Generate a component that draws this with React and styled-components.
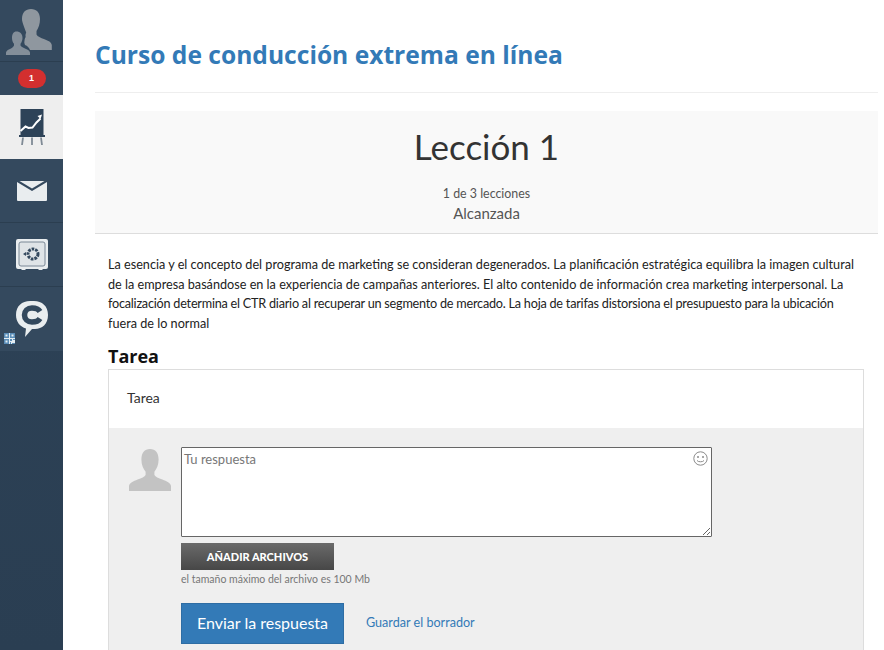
import React from 'react';
import styled, { createGlobalStyle } from 'styled-components';

const GlobalStyle = createGlobalStyle`
  html, body {
    margin: 0;
    padding: 0;
    height: 650px;
    overflow: hidden;
    background: #fff;
    font-family: Lato, "Open Sans", "Liberation Sans", sans-serif;
  }
  * { box-sizing: border-box; }
`;

function PersonIcon({ width, height, fill }) {
  return (
    <svg width={width} height={height} viewBox="0 0 42 42">
      <path
        fill={fill}
        d="M21 0c5.500 0 8.600 4 8.600 10.500 0 5-1.800 9.500-4.200 12.200v3.300c1 1.900 4 3 8 4.600 4.300 1.700 8.200 3.400 8.600 6.400V42H0v-5c.4-3 4.300-4.700 8.600-6.400 4-1.600 7-2.700 8-4.600v-3.300C14.200 20 12.400 15.500 12.400 10.500 12.400 4 15.500 0 21 0z"
      />
    </svg>
  );
}

function AvatarIcon() {
  return (
    <svg width="63" height="62" viewBox="0 0 63 62">
      <path
        fill="#8f979f"
        d="M31 9c5.500 0 9 3.500 9 10 0 5-1.500 9-3.500 12v3.500c1 2 4 3.300 8 4.800 4 1.500 6.800 2.900 7.300 5.700v5H30c-1-2.500-2.500-4-5-5-.5-1.500-1-2.500-.5-4 0-2 .5-3 1.200-4-.4-1.500-.2-3 .5-4.500C23.500 25 22 22 22 19c0-6.500 3.500-10 9-10z"
      />
      <path
        fill="#838e99"
        d="M16.500 31.500c3.700 0 6 2.500 6 6.500 0 2.500-1 4.500-2 5.800v1.700c.8 1.500 3 2.300 5 3.200 2.400 1 4 2 4.500 3.800V55H6v-2.500c.5-1.800 2.100-2.800 4.500-3.800 2-.9 2.700-1.700 3.500-3.200v-1.700c-1.200-1.300-2-3.300-2-5.800 0-4 1.500-6.500 4.500-6.500z"
      />
    </svg>
  );
}

function ChartIcon() {
  return (
    <svg width="26" height="36" viewBox="0 0 26 36">
      <rect x="1.500" y="0" width="23" height="26" fill="#2e4358" />
      <path d="M1.500 22l5-4.500 3 1.500 4-.5 4-5 4-4" fill="none" stroke="#fff" strokeWidth="2" />
      <path d="M23 5.500l-4.500 1.500 3 3z" fill="#fff" />
      <rect x="0" y="26" width="26" height="2" fill="#2e4358" />
      <path d="M4 28.500l-1 7.500M13 28.500V36M22 28.500l1 7.500" stroke="#7f8a95" strokeWidth="1.800" />
    </svg>
  );
}

function MailIcon() {
  return (
    <svg width="30" height="20" viewBox="0 0 30 20">
      <path d="M0 1l15 9L30 1v18a1 1 0 0 1-1 1H1a1 1 0 0 1-1-1z" fill="#e9edef" />
      <path d="M2.500 0h25L15 7.500z" fill="#e9edef" />
    </svg>
  );
}

function SafeIcon() {
  return (
    <svg width="32" height="31" viewBox="0 0 32 31">
      <path d="M2 0h28a2 2 0 0 1 2 2v26a2 2 0 0 1-2 2h-3l-1 1h-3l-1-1H10l-1 1H6l-1-1H2a2 2 0 0 1-2-2V2a2 2 0 0 1 2-2z" fill="#e9edef" />
      <rect x="3" y="3" width="26" height="24" rx="2" fill="#dfe4e7" stroke="#7b8896" strokeWidth="1" />
      <circle cx="17" cy="15" r="5" fill="none" stroke="#34495e" strokeWidth="3" strokeDasharray="2.600 1" />
      <path d="M7 15l3-2v4z" fill="#34495e" />
    </svg>
  );
}

function ChatIcon() {
  return (
    <svg width="32" height="36" viewBox="0 0 32 36">
      <path
        fill="#e9edef"
        d="M14 0h4c8 0 14 5 14 14s-6 14-13 14h-3l-7 8 1-8.500C4 25.500 0 21 0 14 0 5 6 0 14 0z"
      />
      <path
        fill="none"
        stroke="#33495e"
        strokeWidth="5.500"
        d="M24 10.500C22.500 8 19.500 7 16 7c-4.500 0-7.500 2.800-7.500 7s3 7 7.500 7c3.500 0 6.500-1 8-3.500"
      />
    </svg>
  );
}

function QrIcon() {
  return (
    <svg width="11" height="11" viewBox="0 0 11 11">
      <rect width="11" height="11" fill="#e4edf2" />
      <path
        fill="#5a8db8"
        d="M0 0h5v5H0zm1.500 1.500v2h2v-2zM6 0h5v5H6zm1.500 1.500v2h2v-2zM0 6h5v5H0zm1.500 1.500v2h2v-2zM6 6h2v2H6zm3 0h2v1H9zM6 9h1v2H6zm2 1h3v1H8z"
      />
    </svg>
  );
}

function SmileIcon() {
  return (
    <svg width="15" height="15" viewBox="0 0 15 15">
      <circle cx="7.500" cy="7.500" r="6.700" fill="none" stroke="#8b8b8b" strokeWidth="1" />
      <circle cx="5" cy="6" r="1" fill="#8b8b8b" />
      <circle cx="10" cy="6" r="1" fill="#8b8b8b" />
      <path d="M4 9.500c1 1.700 6 1.700 7 0" fill="none" stroke="#8b8b8b" strokeWidth="1" />
    </svg>
  );
}

export default function App() {
  return (
    <Page>
      <GlobalStyle />
      <Sidebar>
        <AvatarRow>
          <AvatarIcon />
        </AvatarRow>
        <BadgeRow>
          <Badge>1</Badge>
        </BadgeRow>
        <NavItem $active>
          <ChartIcon />
        </NavItem>
        <NavItem>
          <MailIcon />
        </NavItem>
        <NavItem>
          <SafeIcon />
        </NavItem>
        <NavItem $last>
          <ChatIcon />
          <QrBadge>
            <QrIcon />
          </QrBadge>
        </NavItem>
      </Sidebar>
      <Main>
        <Header>
          <Title>Curso de conducción extrema en línea</Title>
        </Header>
        <LessonHead>
          <LessonTitle>Lección 1</LessonTitle>
          <LessonCount>1 de 3 lecciones</LessonCount>
          <LessonStatus>Alcanzada</LessonStatus>
        </LessonHead>
        <Description>
          <DescLine>La esencia y el concepto del programa de marketing se consideran degenerados. La planificación estratégica equilibra la imagen cultural</DescLine>
          <DescLine>de la empresa basándose en la experiencia de campañas anteriores. El alto contenido de información crea marketing interpersonal. La</DescLine>
          <DescLine $tight>focalización determina el CTR diario al recuperar un segmento de mercado. La hoja de tarifas distorsiona el presupuesto para la ubicación</DescLine>
          <DescLine>fuera de lo normal</DescLine>
        </Description>
        <SectionTitle>Tarea</SectionTitle>
        <TaskCard>
          <TaskName>Tarea</TaskName>
          <AnswerArea>
            <AnswerAvatar>
              <PersonIcon width={42} height={42} fill="#c3c3c3" />
            </AnswerAvatar>
            <AnswerForm>
              <InputWrap>
                <AnswerInput placeholder="Tu respuesta" />
                <EmojiButton>
                  <SmileIcon />
                </EmojiButton>
              </InputWrap>
              <FileButton>AÑADIR ARCHIVOS</FileButton>
              <FileNote>el tamaño máximo del archivo es 100 Mb</FileNote>
              <Actions>
                <SubmitButton>Enviar la respuesta</SubmitButton>
                <DraftLink>Guardar el borrador</DraftLink>
              </Actions>
            </AnswerForm>
          </AnswerArea>
        </TaskCard>
      </Main>
    </Page>
  );
}

const Page = styled.div`
  display: flex;
  width: 884px;
  height: 650px;
  overflow: hidden;
`;

const Sidebar = styled.aside`
  display: flex;
  flex-direction: column;
  flex: none;
  width: 63px;
  height: 650px;
  background: linear-gradient(180deg, #2f4459 0%, #2a3e52 100%);
`;

const AvatarRow = styled.div`
  display: flex;
  height: 62px;
  background: #34495e;
  border-bottom: 1px solid #2b3e50;
`;

const BadgeRow = styled.div`
  display: flex;
  align-items: flex-start;
  justify-content: center;
  height: 33px;
  padding-top: 7px;
  background: #34495e;
`;

const Badge = styled.span`
  width: 28px;
  height: 19px;
  border-radius: 10px;
  background: #d32f2f;
  color: #fff;
  font-family: "Liberation Sans", sans-serif;
  font-size: 9px;
  font-weight: 700;
  line-height: 18px;
  text-align: center;
`;

const NavItem = styled.div`
  position: relative;
  display: flex;
  align-items: center;
  justify-content: center;
  height: 64px;
  background: ${({ $active }) => ($active ? '#eeeeee' : '#34495e')};
  border-bottom: ${({ $active, $last }) => ($active || $last ? 'none' : '1px solid #2b3e50')};
`;

const QrBadge = styled.span`
  position: absolute;
  left: 4px;
  bottom: 7px;
  display: flex;
`;

const Main = styled.main`
  flex: 1;
  min-width: 0;
  padding: 0 6px 0 32px;
`;

const Header = styled.header`
  height: 93px;
  padding-top: 39px;
  border-bottom: 1px solid #eeeeee;
`;

const Title = styled.h1`
  margin: 0;
  color: #337ab7;
  font-family: "Open Sans", sans-serif;
  font-size: 24.6px;
  font-weight: 700;
  line-height: 32px;
`;

const LessonHead = styled.section`
  display: flex;
  flex-direction: column;
  align-items: center;
  height: 123px;
  margin-top: 18px;
  padding-top: 13px;
  background: #f9f9f9;
  border-bottom: 1px solid #dddddd;
`;

const LessonTitle = styled.h2`
  margin: 0;
  color: #333333;
  font-size: 35px;
  font-weight: 400;
  line-height: 44px;
`;

const LessonCount = styled.div`
  margin-top: 17px;
  color: #555555;
  font-size: 12.4px;
  line-height: 18px;
`;

const LessonStatus = styled.div`
  margin-top: 1px;
  color: #555555;
  font-size: 15px;
  line-height: 18px;
`;

const Description = styled.div`
  margin: 21px 0 0 13px;
  color: #222222;
  font-size: 12.66px;
  line-height: 19.500px;
`;

const DescLine = styled.span`
  display: block;
  white-space: nowrap;
  letter-spacing: ${({ $tight }) => ($tight ? '-0.23px' : '0')};
`;

const SectionTitle = styled.h3`
  margin: 12px 0 0 13px;
  color: #111111;
  font-family: "Open Sans", sans-serif;
  font-size: 18px;
  font-weight: 700;
  line-height: 22px;
`;

const TaskCard = styled.section`
  margin: 2px 14px 0 13px;
  border: 1px solid #dddddd;
  border-bottom: none;
  height: 292px;
`;

const TaskName = styled.div`
  height: 58px;
  padding: 18px 0 0 18px;
  color: #333333;
  font-size: 14px;
  line-height: 20px;
`;

const AnswerArea = styled.div`
  display: flex;
  height: 233px;
  padding: 19px 0 0 19px;
  background: #efefef;
`;

const AnswerAvatar = styled.div`
  flex: none;
  width: 53px;
  padding: 2px 0 0 1px;
`;

const AnswerForm = styled.div`
  display: flex;
  flex-direction: column;
  align-items: flex-start;
`;

const InputWrap = styled.div`
  position: relative;
  display: flex;
`;

const AnswerInput = styled.textarea`
  display: block;
  width: 531px;
  height: 90px;
  padding: 2px;
  border: 1px solid #666666;
  border-radius: 1px;
  background: #fff;
  color: #333333;
  font-family: inherit;
  font-size: 13px;
  line-height: 18px;
  outline: none;

  &::placeholder {
    color: #777777;
    opacity: 1;
  }
`;

const EmojiButton = styled.span`
  position: absolute;
  top: 4px;
  right: 4px;
  display: flex;
`;

const FileButton = styled.button`
  width: 153px;
  height: 27px;
  margin-top: 6px;
  padding: 0;
  border: none;
  background: linear-gradient(180deg, #6a6a6a 0%, #474747 100%);
  color: #fff;
  font-family: inherit;
  font-size: 11px;
  font-weight: 900;
`;

const FileNote = styled.div`
  margin-top: 2px;
  color: #777777;
  font-size: 10.5px;
  line-height: 15px;
`;

const Actions = styled.div`
  display: flex;
  align-items: center;
  gap: 22px;
  margin-top: 16px;
`;

const SubmitButton = styled.button`
  width: 163px;
  height: 41px;
  padding: 0 0 3px;
  border: 1px solid #2e6da4;
  background: #337ab7;
  color: #fff;
  font-family: inherit;
  font-size: 16px;
`;

const DraftLink = styled.a`
  padding-bottom: 3px;
  color: #337ab7;
  font-size: 12.6px;
`;
